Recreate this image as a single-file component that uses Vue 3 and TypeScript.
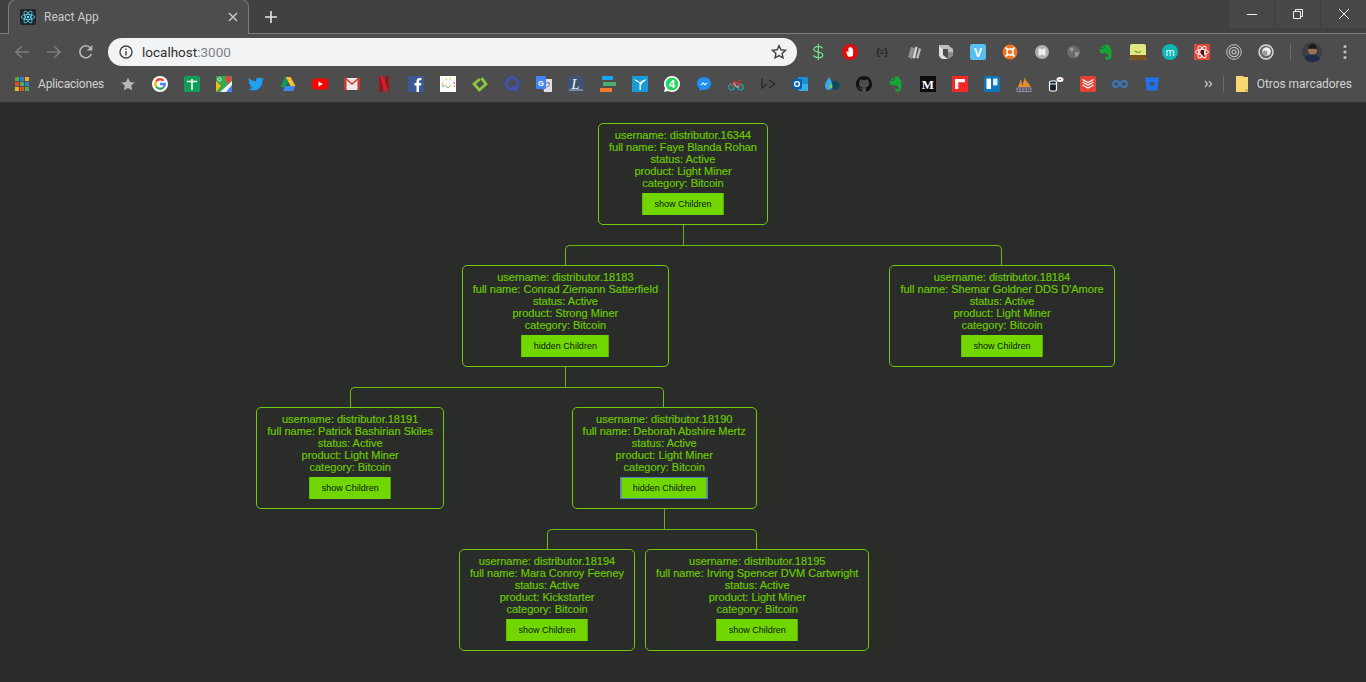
<script setup lang="ts">
interface Distributor {
  username: string;
  fullName: string;
  product: string;
  buttonLabel: string;
  focused?: boolean;
  children?: Distributor[];
}

const tree: Distributor[] = [
  {
    username: 'distributor.16344',
    fullName: 'Faye Blanda Rohan',
    product: 'Light Miner',
    buttonLabel: 'show Children',
    children: [
      {
        username: 'distributor.18183',
        fullName: 'Conrad Ziemann Satterfield',
        product: 'Strong Miner',
        buttonLabel: 'hidden Children',
        children: [
          {
            username: 'distributor.18191',
            fullName: 'Patrick Bashirian Skiles',
            product: 'Light Miner',
            buttonLabel: 'show Children',
          },
          {
            username: 'distributor.18190',
            fullName: 'Deborah Abshire Mertz',
            product: 'Light Miner',
            buttonLabel: 'hidden Children',
            focused: true,
            children: [
              {
                username: 'distributor.18194',
                fullName: 'Mara Conroy Feeney',
                product: 'Kickstarter',
                buttonLabel: 'show Children',
              },
              {
                username: 'distributor.18195',
                fullName: 'Irving Spencer DVM Cartwright',
                product: 'Light Miner',
                buttonLabel: 'show Children',
              },
            ],
          },
        ],
      },
      {
        username: 'distributor.18184',
        fullName: "Shemar Goldner DDS D'Amore",
        product: 'Light Miner',
        buttonLabel: 'show Children',
      },
    ],
  },
];

function lines(d: Distributor): string[] {
  return [
    `username: ${d.username}`,
    `full name: ${d.fullName}`,
    'status: Active',
    `product: ${d.product}`,
    'category: Bitcoin',
  ];
}

const appColors = ['#e0492f', '#4caf50', '#2f80d0', '#f2b01e'];
const evernote =
  'M3 3.5 6 .8v2.4c0 .5-.3.8-.8.8H3z M6.8.6C8 .3 10.3.4 11 1.2c.5.6.4 1.4.8 1.7.9.5 1.6 2 1.7 5 .2 3.6-.2 6.6-2.4 7.5-1.6.6-3.8.3-4-1.5-.2-1.2.8-2 2.3-1.7-.9.1-1.2.7-.9 1.1.4.4 1.9.5 2-1.2 0-1.5-1-2.3-2.6-2.5-1.2 0-1.4-.5-1.7-1-.4.9-1 1.2-2.4 1-1.2-.2-1.8-1.3-2.3-3C1.2 5 2.8 4.7 4.8 4.7c1.3 0 1.9-.5 2-1.9z';
</script>

<template>
  <div class="page">
    <header class="browser">
      <div class="tabstrip">
        <div class="tab">
          <svg class="favicon" viewBox="0 0 16 16">
            <rect width="16" height="16" rx="2" fill="#20232a" />
            <g fill="none" stroke="#61dafb" stroke-width=".8">
              <ellipse cx="8" cy="8" rx="6.6" ry="2.6" />
              <ellipse cx="8" cy="8" rx="6.6" ry="2.6" transform="rotate(60 8 8)" />
              <ellipse cx="8" cy="8" rx="6.6" ry="2.6" transform="rotate(120 8 8)" />
            </g>
            <circle cx="8" cy="8" r="1.3" fill="#61dafb" />
          </svg>
          <span class="tab-title">React App</span>
          <svg class="tab-close" viewBox="0 0 10 10">
            <path d="M1 1l8 8M9 1l-8 8" stroke="#c8c8c8" stroke-width="1.5" />
          </svg>
        </div>
        <svg class="new-tab" viewBox="0 0 12 12">
          <path d="M6 0v12M0 6h12" stroke="#e4e4e4" stroke-width="1.6" />
        </svg>
        <div class="window-controls">
          <div class="win-btn">
            <svg viewBox="0 0 10 10"><path d="M0 5.5h10" stroke="#eee" /></svg>
          </div>
          <div class="win-btn">
            <svg viewBox="0 0 10 10">
              <path d="M.5 2.5h7v7h-7zM2.5 2.5v-2h7v7h-2" fill="none" stroke="#eee" />
            </svg>
          </div>
          <div class="win-btn">
            <svg viewBox="0 0 10 10"><path d="M0 0l10 10M10 0L0 10" stroke="#eee" /></svg>
          </div>
        </div>
      </div>

      <div class="toolbar">
        <div class="nav">
          <svg viewBox="0 0 16 16">
            <path d="M15 8H2M8 2L2 8l6 6" fill="none" stroke="#7b7b7b" stroke-width="1.7" />
          </svg>
          <svg viewBox="0 0 16 16">
            <path d="M1 8h13M8 2l6 6-6 6" fill="none" stroke="#7b7b7b" stroke-width="1.7" />
          </svg>
          <svg viewBox="0 0 16 16">
            <path d="M13.4 10.2A6 6 0 1 1 12.6 4" fill="none" stroke="#b4b4b4" stroke-width="1.7" />
            <path d="M14.4 1v5.6H8.8z" fill="#b4b4b4" />
          </svg>
        </div>
        <div class="omnibox">
          <svg class="info" viewBox="0 0 14 14">
            <circle cx="7" cy="7" r="6" fill="none" stroke="#444" stroke-width="1.4" />
            <path d="M7 6v4.4M7 3.4v1.5" stroke="#444" stroke-width="1.4" />
          </svg>
          <span class="url">localhost<span class="url-port">:3000</span></span>
          <svg class="url-star" viewBox="0 0 16 16">
            <path d="M8 1.6l1.9 4.2 4.6.5-3.4 3.1.9 4.5L8 11.6l-4 2.3.9-4.5-3.4-3.1 4.6-.5z" fill="none" stroke="#444" stroke-width="1.4" />
          </svg>
        </div>
        <div class="extensions">
          <svg viewBox="0 0 16 16" fill="none">
            <path d="M12.800 4.300C11.800 3 10 2.400 8.300 2.400 5.600 2.400 3.800 3.600 3.800 5.300c0 3.700 9 1.900 9 5.600 0 1.700-2 2.800-4.500 2.800-2.200 0-4-.8-5-2.200M8.300 0v16" stroke="#2c5f36" stroke-width="2.800" />
            <path d="M12.800 4.300C11.800 3 10 2.400 8.300 2.400 5.600 2.400 3.800 3.600 3.800 5.300c0 3.700 9 1.900 9 5.600 0 1.700-2 2.800-4.500 2.800-2.200 0-4-.8-5-2.200M8.300 0v16" stroke="#8fcf96" stroke-width="1.300" />
          </svg>
          <svg viewBox="0 0 16 16">
            <circle cx="8" cy="8" r="8" fill="#e00d0d" />
            <path d="M4.3 8.3l1.2 3.2c.4.9 1 1.3 2 1.3h1.4c1.3 0 2.2-.9 2.2-2.2V5.2c0-.9-1.100-.9-1.100 0V3.900c0-.9-1.200-.9-1.200 0V3.400c0-.9-1.200-.9-1.200 0v.8c0-.8-1.200-.8-1.200 0v4.300L5.300 7.500c-.5-.4-1.200.1-1 .8z" fill="#fff" />
          </svg>
          <svg viewBox="0 0 16 16">
            <text x="8" y="11" text-anchor="middle" class="ico-text" font-size="8.500" fill="#1f1f1f">{≡}</text>
          </svg>
          <svg viewBox="0 0 16 16">
            <path d="M2 13L5 3l4 1-3 11z" fill="#8f8f8f" />
            <path d="M6.500 14L9.500 2.500l2 .5-2.500 11.500z" fill="#d8d8d8" />
            <path d="M10 14l3-10 2 1-2.500 9.500z" fill="#bcbcbc" />
          </svg>
          <svg viewBox="0 0 16 16">
            <path d="M1 1h9l5 4v4l-5-1V5H5z" fill="#bdbdbd" />
            <path d="M1 1l4 4v6l5 4H4l-3-3z" fill="#e0e0e0" />
            <path d="M10 15l5-3V9l-5-1z" fill="#8e8e8e" />
          </svg>
          <svg viewBox="0 0 16 16">
            <rect width="16" height="16" rx="2" fill="#56bff0" />
            <text x="8" y="12.500" text-anchor="middle" class="ico-text" font-size="12" fill="#fff">V</text>
          </svg>
          <svg viewBox="0 0 16 16">
            <circle cx="8" cy="8" r="7.500" fill="#f37020" />
            <circle cx="8" cy="8" r="3" fill="none" stroke="#fff" stroke-width="1.500" />
            <path d="M3.500 3.500l2 2M12.500 3.500l-2 2M3.500 12.500l2-2M12.500 12.500l-2-2" stroke="#fff" stroke-width="1.800" />
          </svg>
          <svg viewBox="0 0 16 16">
            <circle cx="8" cy="8" r="7" fill="#b0b0b0" />
            <path d="M4.500 4.500h2L8 6l1.500-1.500h2v7h-2L8 10l-1.500 1.500h-2z" fill="#eee" />
          </svg>
          <svg viewBox="0 0 16 16">
            <circle cx="7.500" cy="8" r="6.500" fill="#6a6a6a" />
            <path d="M3 5l3-2 2 2-2 3zM9 8l4 0-1 4-3 1z" fill="#9a9a9a" />
          </svg>
          <svg viewBox="0 0 16 16"><path :d="evernote" fill="#13a536" /></svg>
          <svg viewBox="0 0 16 16">
            <rect width="16" height="16" rx="2" fill="#dfe883" />
            <path d="M0 11h16v3a2 2 0 0 1-2 2H2a2 2 0 0 1-2-2z" fill="#7a5320" />
            <path d="M8 9C6 9 4.500 8 4.500 6.500 6.500 6.500 8 7.500 8 9zM8 9c0-1 1.500-2 3.500-2C11 8.500 9.500 9 8 9z" fill="#6e9a28" />
          </svg>
          <svg viewBox="0 0 16 16">
            <circle cx="8" cy="8" r="8" fill="#10b5b5" />
            <text x="8" y="11.500" text-anchor="middle" class="ico-text thin" font-size="11" fill="#e6ffff">m</text>
          </svg>
          <svg viewBox="0 0 16 16">
            <rect width="16" height="16" fill="#dc4a3d" />
            <g fill="none" stroke="#fff" stroke-width=".9">
              <ellipse cx="8" cy="8" rx="6.500" ry="2.500" />
              <ellipse cx="8" cy="8" rx="6.500" ry="2.500" transform="rotate(60 8 8)" />
              <ellipse cx="8" cy="8" rx="6.500" ry="2.500" transform="rotate(120 8 8)" />
            </g>
            <path d="M7 6h3v6H9l-1-2-1 1z" fill="#3a1a18" />
          </svg>
          <svg viewBox="0 0 16 16" fill="none" stroke="#c4c4c4">
            <circle cx="8" cy="8" r="7.300" stroke-width="1" />
            <circle cx="8" cy="8" r="4.700" stroke-width="1.200" />
            <circle cx="8" cy="8" r="2" stroke-width="1.200" />
          </svg>
          <svg viewBox="0 0 16 16">
            <circle cx="8" cy="8" r="7" fill="#666" stroke="#ddd" stroke-width="1.400" />
            <circle cx="8.500" cy="7.500" r="4.300" fill="#eee" />
            <circle cx="7" cy="9" r="2.500" fill="#999" />
          </svg>
        </div>
        <span class="tool-sep"></span>
        <svg class="avatar" viewBox="0 0 20 20">
          <circle cx="10" cy="10" r="10" fill="#3c3e44" />
          <path d="M6 8c0-3 2-5 4.500-5S15 5 15 8c0 3-2 5-4.500 5S6 11 6 8z" fill="#9b7258" />
          <path d="M6 7c0-3 2-5 4.500-5S15 4 15 7c-3 0-6-.5-9 0z" fill="#17171a" />
          <path d="M2.500 17c1-3.500 4-4.500 8-4.500s6.500 1 7.500 4.500A10 10 0 0 1 10 20a10 10 0 0 1-7.500-3z" fill="#1d2c4a" />
        </svg>
        <svg class="menu" viewBox="0 0 4 16">
          <circle cx="2" cy="2.500" r="1.600" fill="#bdbdbd" />
          <circle cx="2" cy="8" r="1.600" fill="#bdbdbd" />
          <circle cx="2" cy="13.500" r="1.600" fill="#bdbdbd" />
        </svg>
      </div>

      <div class="bookmarks">
        <div class="apps">
          <i v-for="n in 9" :key="n" :style="{ background: appColors[n % 4] }"></i>
        </div>
        <span class="bm-label apps-label">Aplicaciones</span>
        <svg class="bm-star" viewBox="0 0 16 16">
          <path d="M8 1.500l2 4.400 4.800.5-3.600 3.200 1 4.700L8 12l-4.200 2.300 1-4.700L1.200 6.400 6 5.900z" fill="#b8b8b8" />
        </svg>
        <div class="bm-icons">
          <svg viewBox="0 0 16 16">
            <circle cx="8" cy="8" r="8" fill="#fff" />
            <g fill="none" stroke-width="2.300">
              <path d="M11.600 4.800A4.800 4.800 0 0 0 4 5.500" stroke="#ea4335" />
              <path d="M4 5.500a4.800 4.800 0 0 0 0 5" stroke="#fbbc05" />
              <path d="M4 10.500a4.800 4.800 0 0 0 7.300 1" stroke="#34a853" />
              <path d="M11.300 11.500A4.800 4.800 0 0 0 12.800 8H8" stroke="#4285f4" />
            </g>
          </svg>
          <svg viewBox="0 0 16 16">
            <rect width="16" height="16" rx="1.500" fill="#0f9d58" />
            <path d="M3 5.500h10M8 3v11" stroke="#fff" stroke-width="1.500" />
          </svg>
          <svg viewBox="0 0 16 16">
            <rect width="16" height="16" rx="1" fill="#34a853" />
            <path d="M16 7v9H4z" fill="#4285f4" />
            <path d="M0 5l5 5-5 6z" fill="#fbbc05" />
            <path d="M4 16L16 5v4L10 16z" fill="#f1f1f1" />
            <path d="M12.500 0a3 3 0 0 1 3 3c0 2-2 3-3 5.500C11.500 6 9.500 5 9.500 3a3 3 0 0 1 3-3z" fill="#ea4335" />
            <circle cx="3.500" cy="3.500" r="1.600" fill="none" stroke="#fff" stroke-width=".8" />
          </svg>
          <svg viewBox="0 0 24 24">
            <path d="M23.953 4.570a10 10 0 01-2.825.775 4.958 4.958 0 002.163-2.723c-.951.555-2.005.959-3.127 1.184a4.920 4.920 0 00-8.384 4.482C7.690 8.095 4.067 6.130 1.640 3.162a4.822 4.822 0 00-.666 2.475c0 1.710.870 3.213 2.188 4.096a4.904 4.904 0 01-2.228-.616v.06a4.923 4.923 0 003.946 4.827 4.996 4.996 0 01-2.212.085 4.936 4.936 0 004.604 3.417 9.867 9.867 0 01-6.102 2.105c-.390 0-.779-.023-1.170-.067a13.995 13.995 0 007.557 2.209c9.053 0 13.998-7.496 13.998-13.985 0-.210 0-.420-.015-.630A9.935 9.935 0 0024 4.590z" fill="#1da1f2" />
          </svg>
          <svg viewBox="0 0 16 16">
            <path d="M5.500 1h5l5 9h-5z" fill="#fbc02d" />
            <path d="M5.500 1l5 9-2.500 4.500L0.500 10z" fill="#0f9d58" />
            <path d="M3 15l2.500-5h10L13 15z" fill="#4285f4" />
            <path d="M6 10h4L8 6.500z" fill="#4d4d4d" />
          </svg>
          <svg viewBox="0 0 16 16">
            <rect y="2.500" width="16" height="11" rx="3" fill="#f00" />
            <path d="M6.500 5.500L11 8l-4.500 2.500z" fill="#fff" />
          </svg>
          <svg viewBox="0 0 16 16">
            <rect y="2" width="16" height="12" fill="#e9e9e9" />
            <path d="M0 2h2l6 5 6-5h2L8 9z" fill="#d0392b" />
            <path d="M0 2h2.500v12H0zM13.500 2H16v12h-2.500z" fill="#c8392b" />
          </svg>
          <svg viewBox="0 0 16 16">
            <path d="M3.500 0h3v16l-3-.5z" fill="#b20710" />
            <path d="M9.500 0h3v15.500l-3 .5z" fill="#b20710" />
            <path d="M3.500 0h3l6 15.500-3 .5z" fill="#d81f26" />
          </svg>
          <svg viewBox="0 0 16 16">
            <rect width="16" height="16" fill="#3b5998" />
            <path d="M11 16V9.500h2l.4-2.500H11V5.500c0-.8.3-1.200 1.200-1.200h1.200V2c-.5 0-1.100-.1-1.800-.1C10 1.900 8.500 3.100 8.500 5.300V7H6.500v2.500h2V16z" fill="#fff" />
          </svg>
          <svg viewBox="0 0 16 16">
            <rect width="16" height="16" fill="#fdfdfd" />
            <path d="M1 8l2-1 1 2zM6 2l1 2-1.500.5zM10 1.500l1 2-1.500 0z" fill="#f4b400" />
            <path d="M12.500 7l2.500-1v2z" fill="#ea4c89" />
            <path d="M5 9l3 3 3-3" fill="none" stroke="#8bc34a" />
            <path d="M1 10l3-.5v1.500z" fill="#29b6f6" />
            <path d="M13 10l2-.5v1.500z" fill="#ef5350" />
          </svg>
          <svg viewBox="0 0 16 16">
            <path d="M9 2l5 5.500L8 14 2 8.500 7.500 3" fill="none" stroke="#8cc63f" stroke-width="2.800" transform="rotate(6 8 8)" />
          </svg>
          <svg viewBox="0 0 16 16">
            <circle cx="8" cy="7.500" r="5.800" fill="none" stroke="#3f51b5" stroke-width="2.800" />
            <path d="M9 10l5 5.500" stroke="#3f51b5" stroke-width="2.800" />
          </svg>
          <svg viewBox="0 0 16 16">
            <path d="M6 3h10v13H8z" fill="#e0e0e0" />
            <rect width="10" height="13" rx="1" fill="#4285f4" />
            <text x="5" y="9.500" text-anchor="middle" class="ico-text" font-size="7.500" fill="#fff">G</text>
            <path d="M10 7h4M12 6v1M10.500 11c2 0 3-2 3-4" fill="none" stroke="#777" />
          </svg>
          <svg viewBox="0 0 16 16">
            <rect width="16" height="16" fill="#3e5474" />
            <text x="7.500" y="13" text-anchor="middle" class="ico-script" font-size="14" fill="#fff">L</text>
            <path d="M1 14h14" stroke="#fff" stroke-width=".6" />
          </svg>
          <svg viewBox="0 0 16 16">
            <rect x="2" width="11" height="4" fill="#1aa3f0" />
            <rect x="3" y="6" width="13" height="4" fill="#4caf72" />
            <rect y="12" width="12" height="4" fill="#f57a2c" />
          </svg>
          <svg viewBox="0 0 16 16">
            <rect width="16" height="16" fill="#1a9bd7" />
            <path d="M1.500 3.500c3 .2 4.500.8 6.500 3 2-2.200 3.500-2.800 6.500-3-2 2-3.500 3-4.500 3.500v1.500H8.800V14H7.500V6.800C5.500 6 4 5 1.500 3.500z" fill="#fff" />
          </svg>
          <svg viewBox="0 0 16 16">
            <path d="M8 0a8 8 0 0 1 0 16c-1.500 0-2.800-.4-4-1L0 16l1.100-3.900A8 8 0 0 1 8 0z" fill="#fff" />
            <circle cx="8" cy="8" r="6.400" fill="#25d366" />
            <text x="8" y="12" text-anchor="middle" class="ico-text" font-size="11" fill="#fff">4</text>
          </svg>
          <svg viewBox="0 0 16 16">
            <path d="M8 1C4 1 1 3.900 1 7.500c0 2 1 3.800 2.500 5V15l2.300-1.300c.7.200 1.400.3 2.200.3 4 0 7-2.900 7-6.500S12 1 8 1z" fill="#1e90f5" />
            <path d="M3.800 9.500L7 6.200l1.700 1.600 3.400-1.600-3.200 3.400-1.700-1.700z" fill="#fff" />
          </svg>
          <svg viewBox="0 0 16 16" fill="none">
            <circle cx="3.500" cy="11" r="2.800" stroke="#1f9d8f" stroke-width="1.400" />
            <circle cx="12.500" cy="11" r="2.800" stroke="#1f9d8f" stroke-width="1.400" />
            <path d="M3.500 11L6 7h5l1.500 4M5 6h3M11 4.500h2" stroke="#e0313a" stroke-width="1.500" />
            <path d="M6 7l2.500 4H11" stroke="#d0c8c8" />
          </svg>
          <svg viewBox="0 0 16 16" fill="none" stroke="#23272b" stroke-width="1.200">
            <path d="M2 2.500V12l5-4M9 4l6 4-6 4" />
          </svg>
          <svg viewBox="0 0 16 16">
            <path d="M6 1h9a1 1 0 0 1 1 1v12H6z" fill="#1a8fd8" />
            <path d="M10 8h6v7H7z" fill="#35b0ec" />
            <rect y="3" width="10" height="10" rx=".8" fill="#0a5ea8" />
            <circle cx="5" cy="8" r="2.400" fill="none" stroke="#fff" stroke-width="1.300" />
          </svg>
          <svg viewBox="0 0 16 16">
            <path d="M5 1c1 2 3 4 3 8 0 3-1.500 5-3.500 5S1 12 1 9.500C1 6 4 4 5 1z" fill="#33aaf0" />
            <ellipse cx="11.500" cy="9.500" rx="4" ry="4.500" fill="#0c4a60" />
            <path d="M9 2l1.500 4.500L8 9z" fill="#0c4a60" />
            <ellipse cx="7" cy="10" rx="1.500" ry="2.500" fill="#8bc34a" />
          </svg>
          <svg viewBox="0 0 16 16">
            <path d="M8 0C3.580 0 0 3.580 0 8c0 3.540 2.290 6.530 5.470 7.590.4.070.55-.17.55-.38 0-.19-.01-.82-.01-1.490-2.010.37-2.530-.49-2.690-.94-.09-.23-.48-.94-.82-1.130-.28-.15-.68-.52-.01-.53.63-.01 1.080.58 1.230.82.72 1.210 1.870.87 2.330.66.07-.52.28-.87.51-1.070-1.780-.2-3.640-.89-3.640-3.950 0-.87.31-1.590.82-2.150-.08-.2-.36-1.020.08-2.120 0 0 .67-.21 2.200.82.64-.18 1.320-.27 2-.27.68 0 1.360.09 2 .27 1.530-1.040 2.200-.82 2.200-.82.44 1.100.16 1.920.08 2.120.51.56.82 1.270.82 2.150 0 3.070-1.870 3.750-3.650 3.950.29.25.54.73.54 1.480 0 1.070-.01 1.930-.01 2.200 0 .21.15.46.55.38A8.013 8.013 0 0016 8c0-4.420-3.580-8-8-8z" fill="#111" />
          </svg>
          <svg viewBox="0 0 16 16"><path :d="evernote" fill="#13a536" /></svg>
          <svg viewBox="0 0 16 16">
            <rect width="16" height="16" fill="#0c0c0c" />
            <text x="8" y="12.500" text-anchor="middle" class="ico-serif" font-size="13" fill="#fff">M</text>
          </svg>
          <svg viewBox="0 0 16 16">
            <rect width="16" height="16" fill="#f52828" />
            <path d="M3 3h10v3.300H6.300v3.400H3z" fill="#fff" />
            <path d="M3 9.700h3.300V13H3z" fill="#fff" />
          </svg>
          <svg viewBox="0 0 16 16">
            <rect width="16" height="16" rx="2" fill="#0c76b8" />
            <rect x="2.500" y="2.500" width="4.500" height="10.500" rx=".8" fill="#fff" />
            <rect x="9" y="2.500" width="4.500" height="7" rx=".8" fill="#dcecf5" />
          </svg>
          <svg viewBox="0 0 16 16">
            <path d="M2 11l3-8 1.500 8zM6 11l3-10 2 10zM11 11l-1-7 5 7z" fill="#e8912d" />
            <rect x="1" y="12" width="14" height="3.500" fill="none" stroke="#9aa4c0" stroke-width=".8" />
            <path d="M3 13.800h10" stroke="#9aa4c0" stroke-dasharray="2 1" />
          </svg>
          <svg viewBox="0 0 16 16">
            <rect x="1.500" y="5" width="7" height="10" rx="1.500" fill="#123" stroke="#fff" stroke-width="1.200" />
            <path d="M1.500 8h7" stroke="#fff" />
            <ellipse cx="12" cy="3.500" rx="3.500" ry="2.500" fill="#fff" />
            <path d="M10.500 3.500h3" stroke="#d33" stroke-dasharray="1 .6" />
          </svg>
          <svg viewBox="0 0 16 16">
            <rect width="16" height="16" rx="2" fill="#e44332" />
            <path d="M2.500 6l5.500 3 5.500-3M2.500 9l5.500 3 5.500-3M2.500 3.500l5.500 3 5.500-3" fill="none" stroke="#fff" stroke-width="1.100" />
          </svg>
          <svg viewBox="0 0 16 16">
            <path d="M8 8C6.500 5.500 5.500 5 4 5a3 3 0 0 0 0 6c1.500 0 2.500-.5 4-3s2.500-3 4-3a3 3 0 0 1 0 6c-1.500 0-2.500-.5-4-3z" fill="none" stroke="#3a7cc0" stroke-width="1.800" />
          </svg>
          <svg viewBox="0 0 16 16">
            <path d="M1 1.500h14l-2 13H3z" fill="#1f72f0" />
            <path d="M5.800 6h4.400l-.5 3.500H6.300z" fill="#4d4d4d" />
          </svg>
        </div>
        <div class="bm-right">
          <svg class="chevrons" viewBox="0 0 9 8">
            <path d="M1 1l2.500 3L1 7M5 1l2.500 3L5 7" fill="none" stroke="#b8b8b8" stroke-width="1.500" />
          </svg>
          <span class="bm-sep"></span>
          <svg class="folder" viewBox="0 0 12 16">
            <path d="M0 0h7l1 1h4v15H0z" fill="#f8d775" />
            <path d="M9 13h3v3H9z" fill="#d9b658" />
          </svg>
          <span class="bm-label">Otros marcadores</span>
        </div>
      </div>
    </header>

    <main class="chart">
      <ul class="tree">
        <li v-for="a in tree" :key="a.username">
          <div class="node">
            <p v-for="l in lines(a)" :key="l">{{ l }}</p>
            <button>{{ a.buttonLabel }}</button>
          </div>
          <ul v-if="a.children">
            <li v-for="b in a.children" :key="b.username">
              <div class="node">
                <p v-for="l in lines(b)" :key="l">{{ l }}</p>
                <button>{{ b.buttonLabel }}</button>
              </div>
              <ul v-if="b.children">
                <li v-for="c in b.children" :key="c.username">
                  <div class="node">
                    <p v-for="l in lines(c)" :key="l">{{ l }}</p>
                    <button :class="{ focused: c.focused }">{{ c.buttonLabel }}</button>
                  </div>
                  <ul v-if="c.children">
                    <li v-for="d in c.children" :key="d.username">
                      <div class="node">
                        <p v-for="l in lines(d)" :key="l">{{ l }}</p>
                        <button>{{ d.buttonLabel }}</button>
                      </div>
                    </li>
                  </ul>
                </li>
              </ul>
            </li>
          </ul>
        </li>
      </ul>
    </main>
  </div>
</template>

<style>
html,
body {
  margin: 0;
  background: #292c29;
  overflow: hidden;
}
</style>

<style scoped>
.page {
  height: 682px;
  display: flex;
  flex-direction: column;
  font-family: "Liberation Sans", Arial, sans-serif;
}

/* browser chrome */
.browser {
  background: #4d4d4d;
  height: 102px;
  flex: none;
  font-family: Roboto, "Noto Sans", sans-serif;
  border-bottom: 1px solid #333;
}

.tabstrip {
  height: 33px;
  background: #414141;
  border-bottom: 1px solid #7c7c7c;
  display: flex;
  align-items: flex-start;
  padding-left: 8px;
  box-sizing: content-box;
}

.tab {
  width: 239px;
  height: 33px;
  box-sizing: content-box;
  background: #4d4d4d;
  border: 1px solid #7c7c7c;
  border-bottom: none;
  border-radius: 8px 8px 0 0;
  margin-top: -1px;
  margin-bottom: -1px;
  padding-bottom: 1px;
  display: flex;
  align-items: center;
}

.favicon {
  width: 16px;
  height: 16px;
  margin-left: 11px;
}

.tab-title {
  margin-left: 8px;
  font-size: 12px;
  color: #c9c9c9;
}

.tab-close {
  width: 10px;
  height: 10px;
  margin-left: auto;
  margin-right: 10px;
}

.new-tab {
  width: 12px;
  height: 12px;
  margin: 11px 0 0 16px;
}

.window-controls {
  margin-left: auto;
  display: flex;
}

.win-btn {
  width: 45px;
  height: 28px;
  background: #474747;
  border-left: 1px solid #3d3d3d;
  display: flex;
  align-items: center;
  justify-content: center;
}

.win-btn svg {
  width: 10px;
  height: 10px;
}

.toolbar {
  height: 36px;
  display: flex;
  align-items: center;
  padding-left: 14px;
}

.nav {
  display: flex;
  gap: 16px;
}

.nav svg {
  width: 16px;
  height: 16px;
}

.omnibox {
  width: 689px;
  height: 28px;
  margin-left: 14px;
  border-radius: 14px;
  background: #f1f3f4;
  display: flex;
  align-items: center;
}

.info {
  width: 14px;
  height: 14px;
  margin-left: 11px;
}

.url {
  margin-left: 9px;
  font-size: 13.500px;
  color: #2e2e2e;
}

.url-port {
  color: #7d8187;
}

.url-star {
  width: 16px;
  height: 16px;
  margin-left: auto;
  margin-right: 10px;
}

.extensions {
  display: flex;
  gap: 16px;
  margin-left: 13px;
}

.extensions svg {
  width: 16px;
  height: 16px;
}

.tool-sep {
  width: 1px;
  height: 18px;
  background: #6a6a6a;
  margin-left: 16px;
}

.avatar {
  width: 20px;
  height: 20px;
  margin-left: 11px;
}

.menu {
  width: 4px;
  height: 16px;
  margin-left: 21px;
}

.ico-text {
  font-family: "Liberation Sans", sans-serif;
  font-weight: 700;
}

.ico-text.thin {
  font-weight: 400;
}

.ico-serif {
  font-family: "Liberation Serif", serif;
  font-weight: 700;
}

.ico-script {
  font-family: "Liberation Serif", serif;
  font-style: italic;
}

.bookmarks {
  height: 32px;
  display: flex;
  align-items: center;
  padding: 0 14px 4px;
  box-sizing: border-box;
}

.apps {
  width: 14px;
  height: 14px;
  display: grid;
  grid-template-columns: repeat(3, 4px);
  grid-auto-rows: 4px;
  gap: 1px;
  margin-left: 1px;
}

.bm-label {
  font-size: 12px;
  color: #d2d2d2;
  white-space: nowrap;
}

.apps-label {
  margin-left: 9px;
  letter-spacing: -.2px;
}

.bm-star {
  width: 16px;
  height: 16px;
  margin-left: 16px;
}

.bm-icons {
  display: flex;
  gap: 16px;
  margin-left: 16px;
}

.bm-icons svg {
  width: 16px;
  height: 16px;
}

.bm-right {
  margin-left: auto;
  display: flex;
  align-items: center;
}

.chevrons {
  width: 9px;
  height: 8px;
}

.bm-sep {
  width: 1px;
  height: 16px;
  background: #6a6a6a;
  margin-left: 10px;
}

.folder {
  width: 12px;
  height: 16px;
  margin-left: 12px;
}

.bm-label:last-child {
  margin-left: 9px;
  letter-spacing: -.05px;
}

/* distributor tree */
.chart {
  flex: 1;
  background: #292c29;
  padding-top: 20px;
  overflow: hidden;
}

.tree {
  justify-content: center;
}

ul {
  display: flex;
  list-style: none;
  margin: 0;
  padding: 20px 0 0;
  position: relative;
}

.tree {
  padding-top: 0;
}

ul ul::before {
  content: "";
  position: absolute;
  top: 0;
  left: 50%;
  height: 20px;
  border-left: 1px solid #66b012;
}

li {
  position: relative;
  padding: 20px 5px 0;
  text-align: center;
}

li::before,
li::after {
  content: "";
  position: absolute;
  top: 0;
  right: 50%;
  width: 50%;
  height: 20px;
  box-sizing: border-box;
  border-top: 1px solid #6cbd0c;
}

li::after {
  right: auto;
  left: 50%;
  border-left: 1px solid #6cbd0c;
}

li:only-child {
  padding-top: 0;
}

li:only-child::before,
li:only-child::after {
  display: none;
}

li:first-child::before,
li:last-child::after {
  border: 0 none;
}

li:last-child::before {
  border-right: 1px solid #6cbd0c;
  border-radius: 0 5px 0 0;
}

li:first-child::after {
  border-radius: 5px 0 0 0;
}

.node {
  display: inline-block;
  vertical-align: top;
  padding: 5px 10px 9px;
  border: 1px solid #6fc80a;
  border-radius: 5px;
  color: #6bc800;
  font-size: 11px;
  line-height: 12px;
  white-space: nowrap;
  -webkit-text-stroke: .2px #6bc800;
}

.node p {
  margin: 0;
}

button {
  display: block;
  margin: 4px auto 0;
  height: 22px;
  padding: 0 11.500px;
  background: #72d600;
  color: #0d1600;
  border: none;
  border-right: 1px solid #5aa800;
  border-left: 1px solid #62bc00;
  font-family: "Liberation Sans", Arial, sans-serif;
  font-size: 9px;
  -webkit-text-stroke: 0;
}

button.focused {
  outline: 1px solid #4f80c0;
  box-shadow: inset 0 0 0 1px #5c9a70;
  outline-offset: -1px;
}
</style>
